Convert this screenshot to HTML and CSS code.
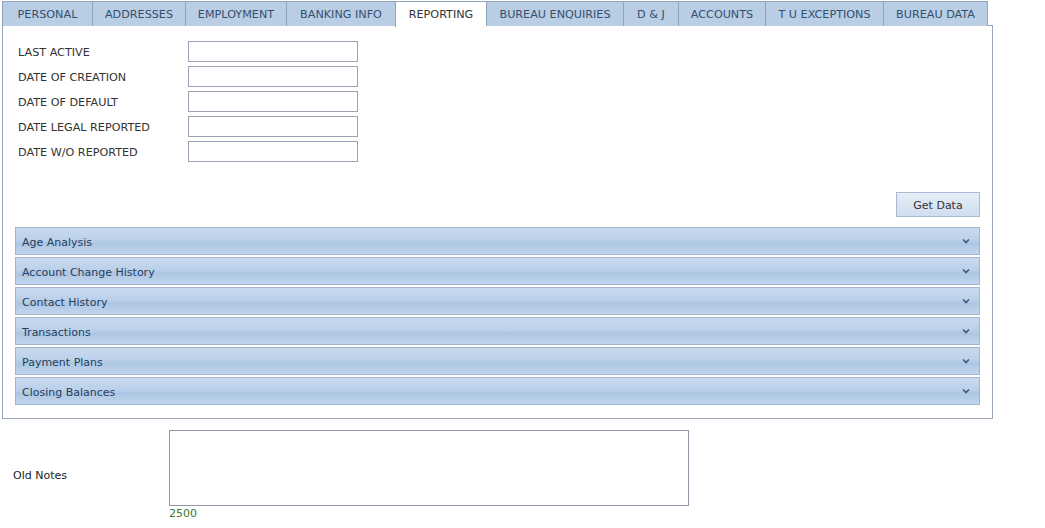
FILE: index.html
```html
<!DOCTYPE html>
<html>
<head>
<meta charset="utf-8">
<link rel="stylesheet" href="styles.css">
</head>
<body>
<div class="tabs">
  <div class="tab">PERSONAL</div>
  <div class="tab">ADDRESSES</div>
  <div class="tab">EMPLOYMENT</div>
  <div class="tab">BANKING INFO</div>
  <div class="tab active">REPORTING</div>
  <div class="tab">BUREAU ENQUIRIES</div>
  <div class="tab">D &amp; J</div>
  <div class="tab">ACCOUNTS</div>
  <div class="tab">T U EXCEPTIONS</div>
  <div class="tab">BUREAU DATA</div>
</div>
<div class="panel">
  <div class="fields">
    <div class="row"><span class="lbl">LAST ACTIVE</span><input class="inp" type="text"></div>
    <div class="row"><span class="lbl">DATE OF CREATION</span><input class="inp" type="text"></div>
    <div class="row"><span class="lbl">DATE OF DEFAULT</span><input class="inp" type="text"></div>
    <div class="row"><span class="lbl">DATE LEGAL REPORTED</span><input class="inp" type="text"></div>
    <div class="row"><span class="lbl">DATE W/O REPORTED</span><input class="inp" type="text"></div>
  </div>
  <div class="actions"><button class="btn">Get Data</button></div>
  <div class="accordion">
    <div class="acc"><span>Age Analysis</span><svg class="chev" width="8" height="6" viewBox="0 0 8 6"><path d="M1 1.5 L4 4.5 L7 1.5" fill="none" stroke="#3d5878" stroke-width="1.6"/></svg></div>
    <div class="acc"><span>Account Change History</span><svg class="chev" width="8" height="6" viewBox="0 0 8 6"><path d="M1 1.5 L4 4.5 L7 1.5" fill="none" stroke="#3d5878" stroke-width="1.6"/></svg></div>
    <div class="acc"><span>Contact History</span><svg class="chev" width="8" height="6" viewBox="0 0 8 6"><path d="M1 1.5 L4 4.5 L7 1.5" fill="none" stroke="#3d5878" stroke-width="1.6"/></svg></div>
    <div class="acc"><span>Transactions</span><svg class="chev" width="8" height="6" viewBox="0 0 8 6"><path d="M1 1.5 L4 4.5 L7 1.5" fill="none" stroke="#3d5878" stroke-width="1.6"/></svg></div>
    <div class="acc"><span>Payment Plans</span><svg class="chev" width="8" height="6" viewBox="0 0 8 6"><path d="M1 1.5 L4 4.5 L7 1.5" fill="none" stroke="#3d5878" stroke-width="1.6"/></svg></div>
    <div class="acc"><span>Closing Balances</span><svg class="chev" width="8" height="6" viewBox="0 0 8 6"><path d="M1 1.5 L4 4.5 L7 1.5" fill="none" stroke="#3d5878" stroke-width="1.6"/></svg></div>
  </div>
</div>
<div class="notes">
  <div class="notes-lbl">Old Notes</div>
  <div class="notes-field">
    <textarea class="ta"></textarea>
    <div class="count">2500</div>
  </div>
</div>
</body>
</html>
```

FILE: styles.css
```css
* { box-sizing: border-box; }
body {
  margin: 0;
  font-family: "DejaVu Sans", Verdana, sans-serif;
  font-size: 11px;
  color: #333;
  background: #fff;
}
.tabs {
  display: flex;
  padding: 1px 0 0 2px;
  height: 26px;
}
.tab {
  height: 25px;
  padding: 0;
  text-align: center;
  line-height: 25px;
  font-size: 11.2px;
  background: #b9cde5;
  border: 1px solid #8fa3bd;
  border-bottom: none;
  border-right: none;
  color: #34506f;
  white-space: nowrap;
}
.tab:nth-child(1) { width: 90px; }
.tab:nth-child(2) { width: 93px; }
.tab:nth-child(3) { width: 101px; }
.tab:nth-child(4) { width: 109px; }
.tab:nth-child(5) { width: 91px; }
.tab:nth-child(6) { width: 137px; }
.tab:nth-child(7) { width: 55px; }
.tab:nth-child(8) { width: 87px; }
.tab:nth-child(9) { width: 118px; }
.tab:nth-child(10) { width: 105px; border-right: 1px solid #8fa3bd; }
.tab.active {
  background: #fff;
  color: #333;
  position: relative;
  z-index: 1;
  height: 26px;
}
.panel {
  margin: -1px 0 0 2px;
  width: 991px;
  border: 1px solid #99a6b8;
  padding: 15px 12px 13px 12px;
}
.fields {
  display: flex;
  flex-direction: column;
  gap: 4px;
  padding-left: 3px;
}
.row {
  display: flex;
  align-items: center;
  height: 21px;
}
.lbl {
  width: 170px;
  color: #333;
  font-size: 11.2px;
  padding-top: 1px;
}
.inp {
  width: 170px;
  height: 21px;
  border: 1px solid #9aa4b2;
  margin: 0;
  padding: 0;
  background: #fff;
}
.actions {
  display: flex;
  justify-content: flex-end;
  margin-top: 30px;
}
.btn {
  width: 84px;
  height: 25px;
  font-family: "DejaVu Sans", Verdana, sans-serif;
  font-size: 11px;
  color: #333;
  border: 1px solid #a8bbd5;
  background: linear-gradient(#e6eef8, #cfddef);
  padding: 2px 0 0 0;
}
.accordion {
  margin-top: 10px;
  display: flex;
  flex-direction: column;
  gap: 2px;
}
.acc {
  height: 28px;
  display: flex;
  align-items: center;
  justify-content: space-between;
  padding: 2px 9px 0 6px;
  border: 1px solid #a3b5cd;
  background: linear-gradient(#c9daef 0%, #bcd0ea 45%, #adc6e3 60%, #c2d5ee 100%);
  color: #24405f;
}
.chev { margin-top: -3px; }
.notes {
  display: flex;
  align-items: center;
  margin-top: 11px;
}
.notes-lbl {
  width: 169px;
  padding-left: 13px;
  color: #222;
}
.notes-field {
  display: flex;
  flex-direction: column;
}
.ta {
  display: block;
  width: 520px;
  height: 76px;
  border: 1px solid #8d97a6;
  margin: 0;
  resize: none;
}
.count {
  color: #3a7a2e;
  margin-top: 1px;
  line-height: 13px;
}
```
